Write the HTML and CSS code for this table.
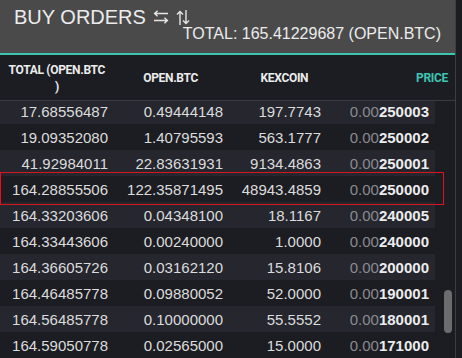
FILE: index.html
```html
<!DOCTYPE html>
<html>
<head>
<meta charset="utf-8">
<link rel="stylesheet" href="styles.css">
</head>
<body>
<div class="panel">
  <header class="top">
    <h1 class="title">BUY ORDERS
      <svg class="ic ic-swap" width="16" height="14" viewBox="0 0 16 14"><path d="M15 3.5H1.6M4.6 0.8L1.6 3.5L4.6 6.2M1 10.5H14.4M11.4 7.8L14.4 10.5L11.4 13.2" fill="none" stroke="#e6e6e6" stroke-width="1.4"/></svg>
      <svg class="ic ic-sort" width="14" height="15" viewBox="0 0 14 15"><path d="M4 15V1.6M1 4.6L4 1.6L7 4.6M10 0V13.4M7 10.4L10 13.4L13 10.4" fill="none" stroke="#e6e6e6" stroke-width="1.4"/></svg>
    </h1>
    <div class="total">TOTAL: 165.41229687 (OPEN.BTC)</div>
  </header>
  <div class="thead">
    <div class="th">TOTAL (OPEN.BTC<br>)</div>
    <div class="th">OPEN.BTC</div>
    <div class="th">KEXCOIN</div>
    <div class="th th-price">PRICE</div>
  </div>
  <div class="tbody">
    <div class="rows">
      <div class="row"><span>17.68556487</span><span>0.49444148</span><span>197.7743</span><span class="price"><i>0.00</i><b>250003</b></span></div>
      <div class="row"><span>19.09352080</span><span>1.40795593</span><span>563.1777</span><span class="price"><i>0.00</i><b>250002</b></span></div>
      <div class="row"><span>41.92984011</span><span>22.83631931</span><span>9134.4863</span><span class="price"><i>0.00</i><b>250001</b></span></div>
      <div class="row mine"><span>164.28855506</span><span>122.35871495</span><span>48943.4859</span><span class="price"><i>0.00</i><b>250000</b></span></div>
      <div class="row"><span>164.33203606</span><span>0.04348100</span><span>18.1167</span><span class="price"><i>0.00</i><b>240005</b></span></div>
      <div class="row"><span>164.33443606</span><span>0.00240000</span><span>1.0000</span><span class="price"><i>0.00</i><b>240000</b></span></div>
      <div class="row"><span>164.36605726</span><span>0.03162120</span><span>15.8106</span><span class="price"><i>0.00</i><b>200000</b></span></div>
      <div class="row"><span>164.46485778</span><span>0.09880052</span><span>52.0000</span><span class="price"><i>0.00</i><b>190001</b></span></div>
      <div class="row"><span>164.56485778</span><span>0.10000000</span><span>55.5552</span><span class="price"><i>0.00</i><b>180001</b></span></div>
      <div class="row"><span>164.59050778</span><span>0.02565000</span><span>15.0000</span><span class="price"><i>0.00</i><b>171000</b></span></div>
    </div>
    <div class="scroll"><div class="thumb"></div></div>
  </div>
</div>
</body>
</html>
```
FILE: styles.css
```css
html, body {
  margin: 0;
  padding: 0;
  background: #1c1d22;
}
body {
  width: 462px;
  height: 358px;
  overflow: hidden;
  font-family: "Liberation Sans", Arial, sans-serif;
  color: #dcdcdc;
}
.panel {
  width: 455px;
  height: 358px;
  border-right: 1px solid #3d3e44;
  background: #1c1d22;
}
.top {
  height: 46px;
  padding: 7px 14px 0;
  background: #4a4a4a;
  border-bottom: 2px solid #3ec5b2;
}
.title {
  margin: 0;
  font-size: 20px;
  line-height: 20px;
  font-weight: normal;
  color: #ececec;
  display: flex;
  align-items: center;
  gap: 0;
}
.ic { display: block; }
.ic-swap { margin-left: 7px; }
.ic-sort { margin-left: 7px; }
.total {
  margin-top: -1px;
  font-size: 16px;
  line-height: 16px;
  text-align: right;
  color: #ececec;
}
.thead {
  display: grid;
  grid-template-columns: repeat(4, 1fr);
  height: 46px;
  align-items: center;
  padding-top: 2px;
  box-sizing: border-box;
  border-bottom: 1px solid #3a3b40;
  font-family: Roboto, "Liberation Sans", sans-serif;
  font-weight: bold;
  font-size: 12px;
  line-height: 17px;
  letter-spacing: -0.3px;
  color: #ececec;
}
.th { text-align: center; }
.th-price {
  text-align: right;
  padding-right: 7px;
  color: #3ec5b2;
}
.tbody {
  display: flex;
  height: 256px;
  overflow: hidden;
}
.rows {
  width: 435px;
  flex: none;
}
.row {
  display: grid;
  grid-template-columns: 118px 115px 98px 104px;
  height: 26px;
  align-items: center;
  font-size: 15px;
  background: #1c1d22;
}
.row:first-child { margin-top: -3px; }
.row:nth-child(odd) { background: #25262e; }
.row span {
  text-align: right;
  padding-right: 10px;
  white-space: nowrap;
}
.row span.price { padding-right: 6px; }
.price i {
  font-style: normal;
  color: #8b8b8e;
}
.price b {
  font-weight: bold;
  color: #ececec;
}
.row.mine { position: relative; }
.row.mine::after {
  content: "";
  position: absolute;
  top: -4px;
  bottom: -3px;
  left: 0;
  right: -9px;
  border: 1px solid #d8161e;
}
.scroll {
  flex: 1;
}
.thumb {
  margin: 189px 0 0 9px;
  width: 8px;
  height: 43px;
  border-radius: 4px;
  background: #6c6c6e;
}
```
